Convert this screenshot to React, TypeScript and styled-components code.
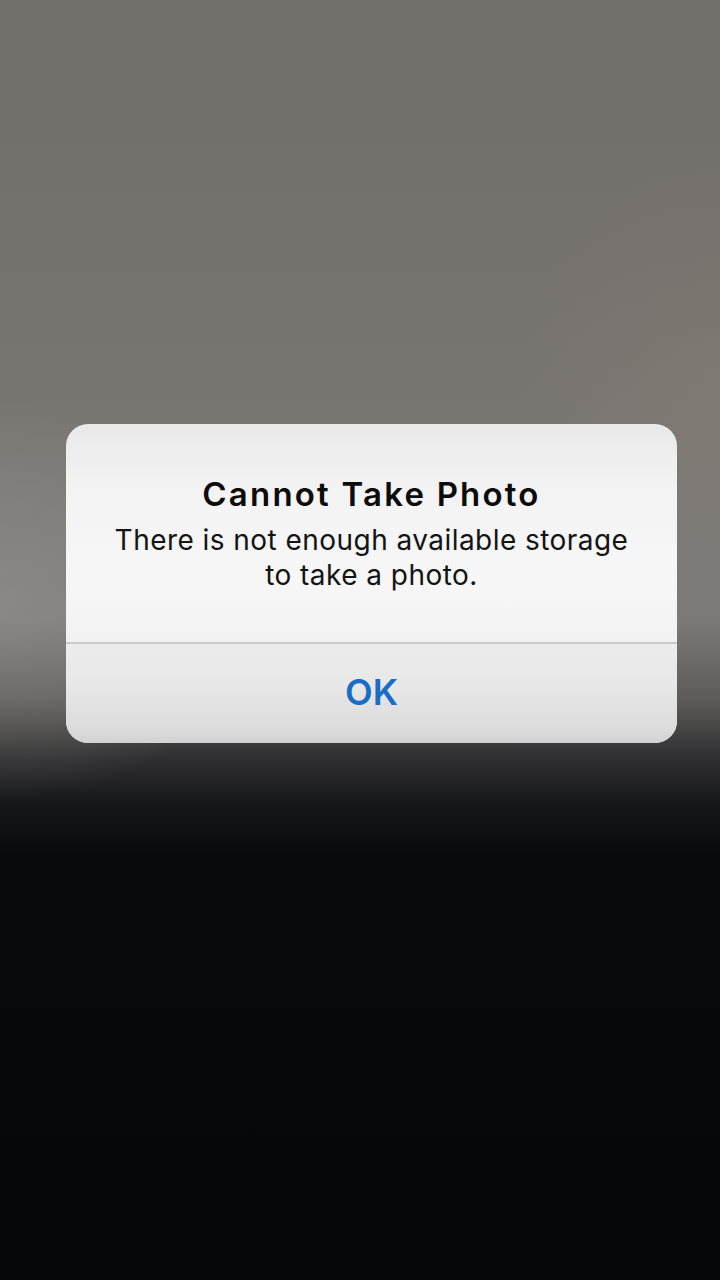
import React from "react";
import styled, { createGlobalStyle } from "styled-components";

const Global = createGlobalStyle`
  html, body { margin: 0; padding: 0; background: #06070a; }
  * { box-sizing: border-box; }
`;

const Screen = styled.div`
  width: 720px;
  height: 1280px;
  overflow: hidden;
  padding: 424px 0 0 66px;
  background:
    radial-gradient(ellipse 260px 200px at 0px 600px, rgba(150, 148, 144, 0.55), rgba(150, 148, 144, 0) 100%),
    radial-gradient(ellipse 200px 220px at 720px 380px, rgba(140, 128, 118, 0.35), rgba(140, 128, 118, 0) 100%),
    linear-gradient(
      to bottom,
      #726e6a 0px,
      #75716d 250px,
      #7a7773 450px,
      #7c7a77 620px,
      #5c5b59 700px,
      #2e2e30 760px,
      #141518 810px,
      #08090c 860px,
      #06070a 1280px
    );
  font-family: Inter, "Noto Sans", "Liberation Sans", sans-serif;
`;

const Alert = styled.div`
  width: 611px;
  height: 319px;
  border-radius: 22px;
  overflow: hidden;
  display: flex;
  flex-direction: column;
  background: linear-gradient(to bottom, #e9e9e9 0%, #f3f3f3 20%, #f7f7f7 50%, #f2f2f2 68%);
`;

const Content = styled.div`
  height: 218px;
  display: flex;
  flex-direction: column;
  align-items: center;
  padding-top: 51px;
  text-align: center;
`;

const Title = styled.div`
  font-size: 33px;
  font-weight: 600;
  color: #0c0c0c;
  line-height: 38px;
  letter-spacing: 2.2px;
`;

const Message = styled.div`
  margin-top: 10px;
  font-size: 28px;
  font-weight: 400;
  color: #141414;
  line-height: 35px;
  letter-spacing: 0.45px;
`;

const Divider = styled.div`
  height: 1.5px;
  background: #c9c9c9;
`;

const Button = styled.div`
  flex: 1;
  display: flex;
  align-items: center;
  justify-content: center;
  padding-bottom: 2px;
  font-size: 36px;
  font-weight: 600;
  color: #186ec6;
  background: linear-gradient(to bottom, #ececec 0%, #e8e8e8 40%, #dcdcdc 85%, #d2d2d2 100%);
`;

export default function App() {
  return (
    <>
      <Global />
      <Screen>
        <Alert>
          <Content>
            <Title>Cannot Take Photo</Title>
            <Message>
              There is not enough available storage
              <br />
              to take a photo.
            </Message>
          </Content>
          <Divider />
          <Button>OK</Button>
        </Alert>
      </Screen>
    </>
  );
}
